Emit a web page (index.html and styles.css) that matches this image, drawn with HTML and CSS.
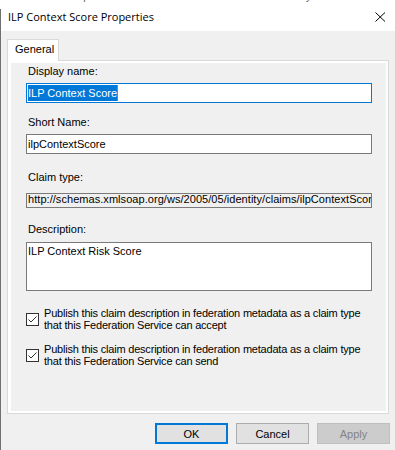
FILE: index.html
```html
<!DOCTYPE html>
<html lang="en">
<head>
    <meta charset="UTF-8">
    <meta name="viewport" content="width=device-width, initial-scale=1.0">
    <title>ILP Context Score Properties</title>
    <link rel="stylesheet" href="styles.css">
</head>
<body>
    <!-- window behind, only its bottom edge shows -->
    <div class="behind"><span>http://schemas.microsoft.com/ws/2008/06/identity/claims/role</span></div>

    <div class="window">
        <div class="titlebar">
            <span class="title">ILP Context Score Properties</span>
            <svg class="close" width="11" height="10" viewBox="0 0 11 10">
                <path d="M0.5 0.5 L10 9.5 M10 0.5 L0.5 9.5" stroke="#000" stroke-width="1" fill="none"/>
            </svg>
        </div>

        <div class="main">
            <div class="tabs">
                <div class="tab">General</div>
            </div>
            <div class="panel">
                <div class="page">
                    <label class="label label-first">Display name:</label>
                    <div class="textbox focused"><span class="selected">ILP Context Score</span><span class="caret"></span></div>

                    <label class="label label-second">Short Name:</label>
                    <div class="textbox">ilpContextScore</div>

                    <label class="label label-third">Claim type:</label>
                    <div class="textbox readonly">http://schemas.xmlsoap.org/ws/2005/05/identity/claims/ilpContextScore</div>

                    <label class="label label-fourth">Description:</label>
                    <div class="textbox textarea">ILP Context Risk Score</div>

                    <div class="check-row check-first">
                        <svg class="checkbox" width="13" height="13" viewBox="0 0 13 13">
                            <rect x="0.5" y="0.5" width="12" height="12" fill="#fff" stroke="#333"/>
                            <path d="M2.5 6.5 L5 9 L10.5 3.5" stroke="#333" stroke-width="1" fill="none"/>
                        </svg>
                        <span class="check-text">Publish this claim description in federation metadata as a claim type<br>that this Federation Service can accept</span>
                    </div>
                    <div class="check-row check-second">
                        <svg class="checkbox" width="13" height="13" viewBox="0 0 13 13">
                            <rect x="0.5" y="0.5" width="12" height="12" fill="#fff" stroke="#333"/>
                            <path d="M2.5 6.5 L5 9 L10.5 3.5" stroke="#333" stroke-width="1" fill="none"/>
                        </svg>
                        <span class="check-text">Publish this claim description in federation metadata as a claim type<br>that this Federation Service can send</span>
                    </div>
                </div>
            </div>

            <div class="buttons">
                <button class="btn btn-default">OK</button>
                <button class="btn">Cancel</button>
                <button class="btn" disabled>Apply</button>
            </div>
        </div>
    </div>
</body>
</html>
```

FILE: styles.css
```css
/* 基本樣式 */
body {
    margin: 0;
    background-color: #fff;
    font-family: "Liberation Sans", Arial, sans-serif;
    font-size: 11px;
    color: #000;
}

.behind {
    height: 9px;
    overflow: hidden;
    padding-left: 71px;
    color: #666;
}

.behind span {
    display: block;
    margin-top: -10px;
    line-height: 13px;
    white-space: nowrap;
}

.window {
    height: 441px;
    border-left: 1px solid #707070;
    background-color: #f0f0f0;
}

/* 標題列 */
.titlebar {
    height: 22px;
    display: flex;
    justify-content: space-between;
    align-items: flex-start;
    padding: 0 9px 0 7px;
    background-color: #fff;
}

.title {
    font-family: "Open Sans", "Noto Sans", sans-serif;
    font-size: 11px;
    line-height: 15px;
}

.close {
    margin-top: 3px;
}

.main {
    padding: 8px 6px 0 6px;
}

/* 分頁 */
.tabs {
    display: flex;
}

.tab {
    position: relative;
    width: 52px;
    height: 22px;
    box-sizing: border-box;
    margin-bottom: -1px;
    padding: 3px 0 0 7px;
    border: 1px solid #d9d9d9;
    border-bottom: none;
    background-color: #fff;
    line-height: 13px;
}

.panel {
    border: 1px solid #d9d9d9;
    background-color: #fff;
    padding: 2px 2px 2px 3px;
}

.page {
    height: 348px;
    background-color: #f0f0f0;
    overflow: hidden;
}

/* 欄位 */
.label {
    display: block;
    padding-left: 17px;
    line-height: 13px;
}

.label-first { margin-top: 2px; }
.label-second { margin-top: 13px; }
.label-third { margin-top: 17px; }
.label-fourth { margin-top: 15px; }

.textbox {
    width: 346px;
    height: 20px;
    box-sizing: border-box;
    margin: 5px 0 0 15px;
    padding: 1px 1px;
    border: 1px solid #7a7a7a;
    background-color: #fff;
    line-height: 16px;
    white-space: nowrap;
    overflow: hidden;
}

.textbox.focused {
    border-color: #0078d7;
}

.selected {
    display: inline-block;
    background-color: #0078d7;
    color: #fff;
    vertical-align: top;
}

.caret {
    display: inline-block;
    width: 1px;
    height: 16px;
    background-color: #c8752c;
    vertical-align: top;
}

.textbox.readonly {
    height: 15px;
    margin-top: 9px;
    padding: 0 1px;
    background-color: #f0f0f0;
    line-height: 10px;
    letter-spacing: 0.05px;
}

.textbox.textarea {
    height: 49px;
    margin-top: 6px;
    padding: 2px 1px;
    line-height: 13px;
    white-space: normal;
}

/* 勾選框 */
.check-row {
    display: flex;
    align-items: flex-start;
    margin-left: 15px;
}

.check-first { margin-top: 16px; }
.check-second { margin-top: 12px; }

.checkbox {
    flex-shrink: 0;
    margin-top: 6px;
}

.check-text {
    margin-left: 5px;
    line-height: 12px;
    letter-spacing: -0.2px;
}

/* 按鈕 */
.buttons {
    display: flex;
    justify-content: flex-end;
    gap: 8px;
    margin: 9px -1px 0 0;
}

.btn {
    width: 73px;
    height: 21px;
    box-sizing: border-box;
    padding: 0;
    border: 1px solid #adadad;
    background-color: #e1e1e1;
    font-family: "Liberation Sans", Arial, sans-serif;
    font-size: 11px;
    color: #000;
}

.btn-default {
    border: 2px solid #0078d7;
}

.btn:disabled {
    border-color: #bfbfbf;
    background-color: #cccccc;
    color: #838383;
}
```
